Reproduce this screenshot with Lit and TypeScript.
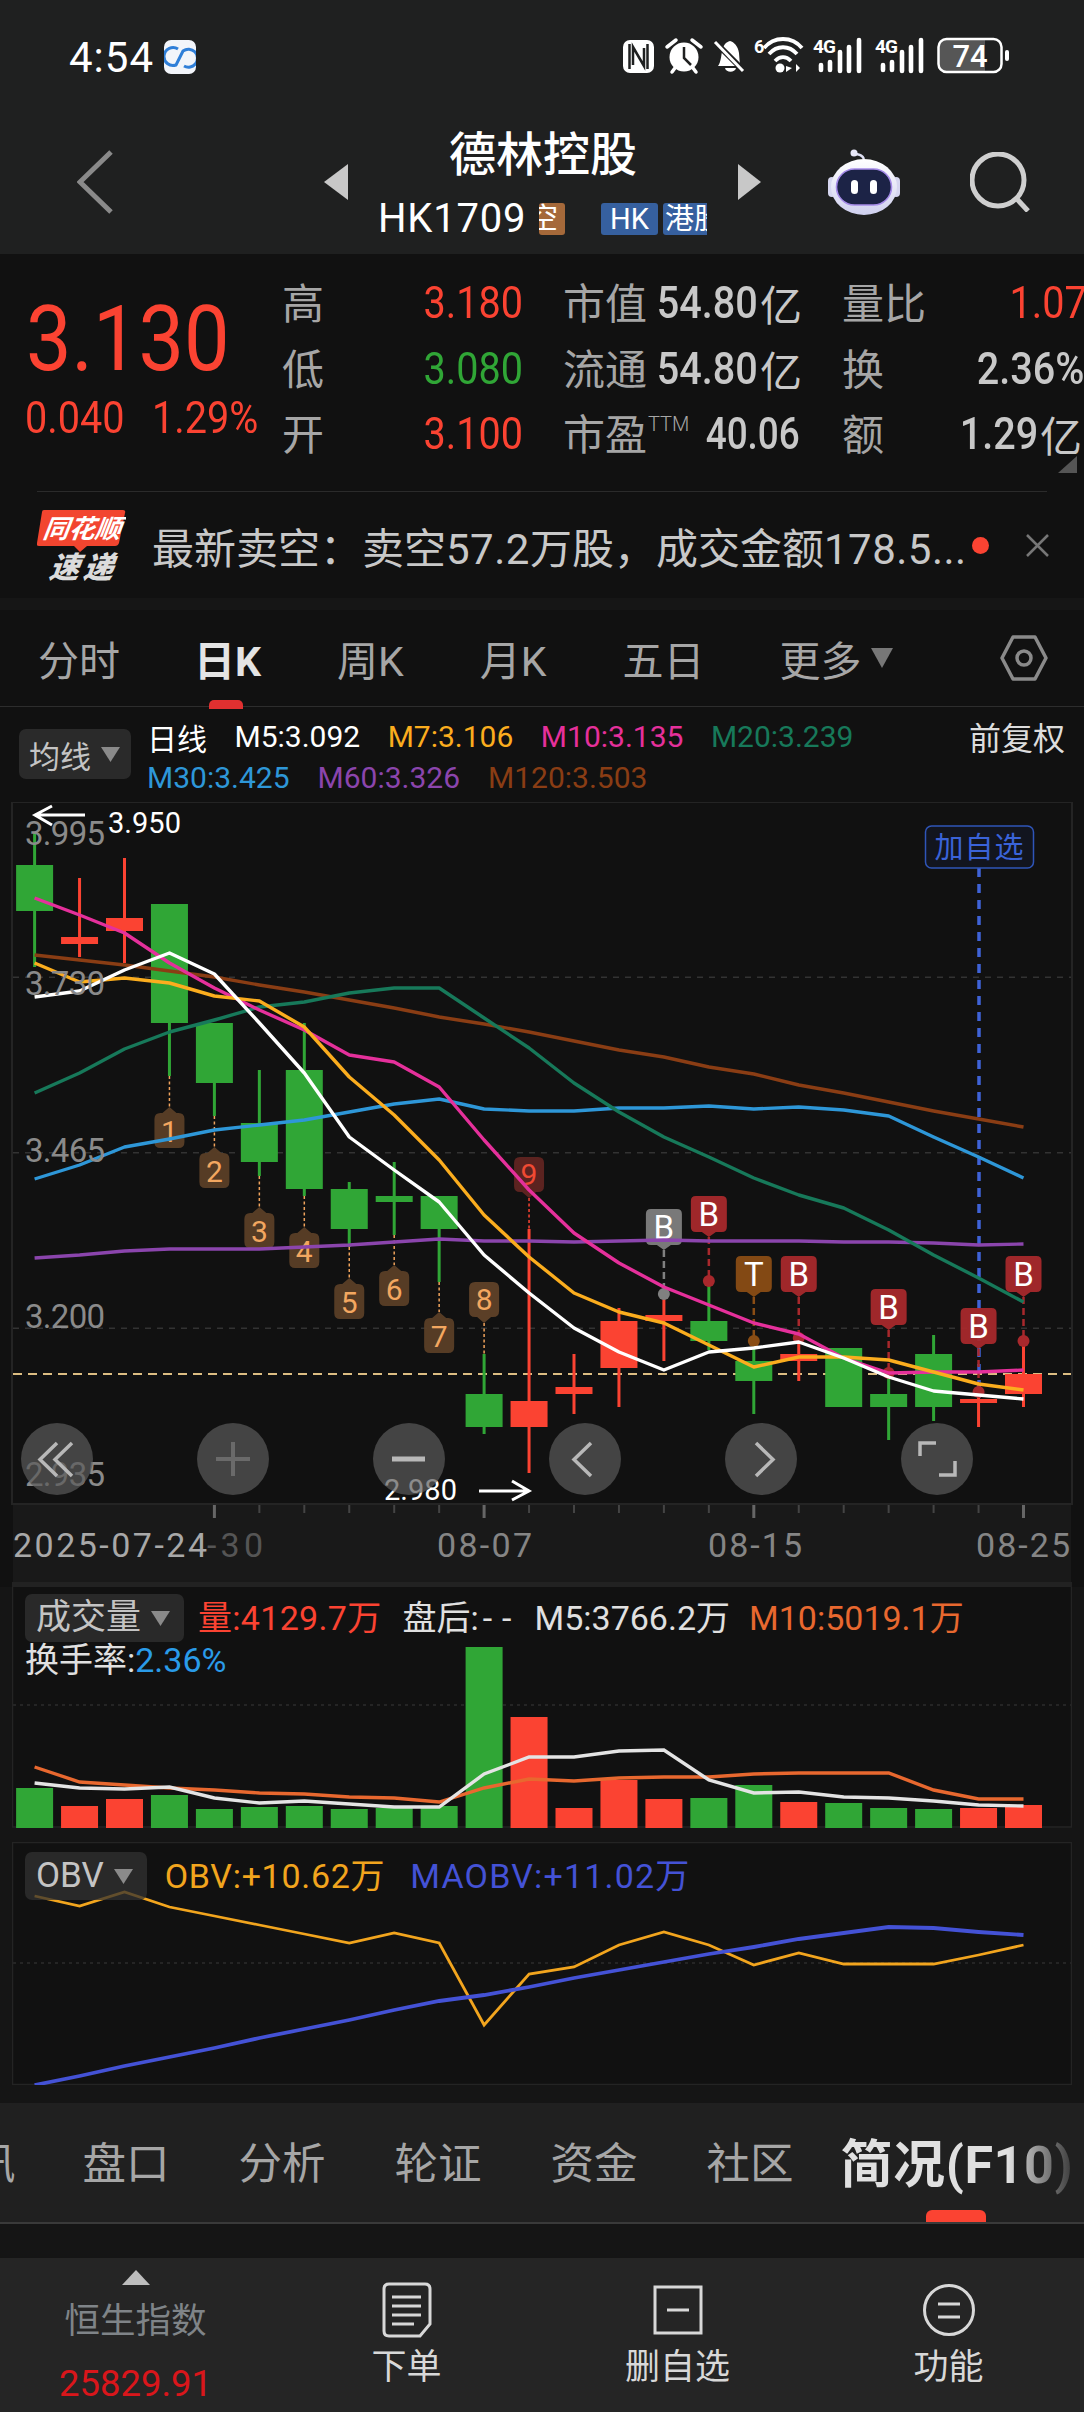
import { LitElement, html, css, svg } from 'lit';
import { customElement } from 'lit/decorators.js';

const RED = '#fb4332';
const GREEN = '#30a636';
const X0 = 34.6;
const STEP = 44.95;
const xi = (i: number) => X0 + STEP * i;

// [bodyTop, bodyBottom, wickTop, wickBottom, isRed]
const CANDLES: [number, number, number, number, number][] = [
  [865, 911, 833, 967, 0],
  [937, 944, 878, 957, 1],
  [918, 931, 858, 963, 1],
  [904, 1023, 904, 1076, 0],
  [1023, 1083, 1023, 1116, 0],
  [1123, 1162, 1070, 1176, 0],
  [1070, 1189, 1023, 1196, 0],
  [1189, 1229, 1182, 1247, 0],
  [1196, 1202, 1162, 1235, 0],
  [1196, 1229, 1196, 1282, 0],
  [1394, 1427, 1354, 1434, 0],
  [1401, 1427, 1229, 1473, 1],
  [1387, 1394, 1354, 1414, 1],
  [1321, 1368, 1308, 1407, 1],
  [1315, 1321, 1295, 1361, 1],
  [1321, 1341, 1282, 1350, 0],
  [1361, 1381, 1342, 1414, 0],
  [1354, 1361, 1335, 1381, 1],
  [1348, 1407, 1348, 1407, 0],
  [1394, 1407, 1373, 1440, 0],
  [1354, 1407, 1335, 1421, 0],
  [1399, 1403, 1393, 1427, 1],
  [1374, 1394, 1343, 1407, 1],
];

const MA: { color: string; ys: number[] }[] = [
  { color: '#8a3d14', ys: [955, 960, 965, 971, 977, 985, 992, 1000, 1008, 1017, 1024, 1032, 1041, 1050, 1057, 1067, 1074, 1085, 1093, 1102, 1111, 1119, 1127] },
  { color: '#8b45ad', ys: [1258, 1255, 1251, 1249, 1249, 1249, 1247, 1245, 1242, 1239, 1241, 1241, 1242, 1241, 1240, 1241, 1241, 1241, 1242, 1242, 1243, 1245, 1244] },
  { color: '#2e97d8', ys: [1179, 1165, 1147, 1139, 1130, 1125, 1120, 1112, 1104, 1099, 1109, 1111, 1111, 1108, 1108, 1106, 1109, 1107, 1110, 1116, 1137, 1157, 1178] },
  { color: '#17795a', ys: [1093, 1073, 1049, 1032, 1020, 1007, 1002, 993, 988, 988, 1018, 1048, 1083, 1112, 1137, 1157, 1178, 1195, 1208, 1230, 1255, 1278, 1302] },
  { color: '#e5309b', ys: [898, 915, 933, 963, 988, 1010, 1030, 1055, 1062, 1087, 1140, 1190, 1233, 1263, 1287, 1305, 1323, 1334, 1358, 1373, 1372, 1372, 1370] },
  { color: '#fbad1e', ys: [963, 982, 978, 983, 996, 1001, 1027, 1077, 1115, 1160, 1215, 1257, 1293, 1312, 1323, 1345, 1367, 1357, 1357, 1360, 1372, 1384, 1390] },
  { color: '#ffffff', ys: [997, 991, 970, 953, 974, 1023, 1073, 1137, 1170, 1202, 1255, 1293, 1328, 1352, 1370, 1352, 1348, 1342, 1358, 1377, 1391, 1395, 1399] },
];

const NUM_MARKS = [
  { i: 3, text: '1', top: 1107, s: 1076 },
  { i: 4, text: '2', top: 1147, s: 1116 },
  { i: 5, text: '3', top: 1207, s: 1176 },
  { i: 6, text: '4', top: 1227, s: 1196 },
  { i: 7, text: '5', top: 1278, s: 1247 },
  { i: 8, text: '6', top: 1265, s: 1235 },
  { i: 9, text: '7', top: 1312, s: 1282 },
];

const TRADE_MARKS = [
  { i: 14, text: 'B', top: 1209, dot: 1294, color: '#808080' },
  { i: 15, text: 'B', top: 1196, dot: 1281, color: '#a8282c' },
  { i: 16, text: 'T', top: 1256, dot: 1341, color: '#8a4d14' },
  { i: 17, text: 'B', top: 1256, dot: 1338, color: '#a8282c' },
  { i: 19, text: 'B', top: 1289, dot: 1373, color: '#a8282c' },
  { i: 21, text: 'B', top: 1308, dot: 1392, color: '#a8282c' },
  { i: 22, text: 'B', top: 1256, dot: 1341, color: '#a8282c' },
];

const VOL: [number, number][] = [
  [1788, 0], [1806, 1], [1799, 1], [1795, 0], [1809, 0], [1807, 0], [1806, 0], [1809, 0], [1808, 0], [1806, 0], [1647, 0], [1717, 1],
  [1808, 1], [1780, 1], [1799, 1], [1798, 0], [1785, 0], [1802, 1], [1803, 0], [1808, 0], [1809, 0], [1808, 1], [1805, 1],
];
const VOL_M5 = [1783, 1788, 1789, 1787, 1798, 1803, 1801, 1804, 1807, 1807, 1774, 1757, 1757, 1751, 1750, 1780, 1793, 1792, 1797, 1798, 1801, 1805, 1806];
const VOL_M10 = [1767, 1782, 1785, 1788, 1790, 1793, 1794, 1797, 1798, 1802, 1788, 1779, 1781, 1778, 1777, 1777, 1774, 1773, 1773, 1773, 1790, 1799, 1799];
const OBV = [1896, 1906, 1892, 1907, 1916, 1925, 1934, 1943, 1933, 1943, 2025, 1974, 1967, 1945, 1932, 1945, 1965, 1953, 1964, 1964, 1964, 1955, 1945];
const MAOBV = [2085, 2076, 2066, 2057, 2048, 2038, 2029, 2020, 2010, 2001, 1995, 1987, 1978, 1970, 1962, 1954, 1947, 1939, 1933, 1927, 1928, 1932, 1935];

const pts = (ys: number[]) => ys.map((y, i) => `${xi(i).toFixed(1)},${y}`).join(' ');

// rounded box with a little point on top or bottom
function tagPath(cx: number, top: number, w: number, h: number, point: number, up: boolean, r: number) {
  const l = cx - w / 2;
  const rr = cx + w / 2;
  const b = top + h;
  if (up) {
    return `M${cx} ${top - point}L${cx + 7} ${top}H${rr - r}Q${rr} ${top} ${rr} ${top + r}V${b - r}Q${rr} ${b} ${rr - r} ${b}H${l + r}Q${l} ${b} ${l} ${b - r}V${top + r}Q${l} ${top} ${l + r} ${top}H${cx - 7}Z`;
  }
  return `M${cx} ${b + point}L${cx + 7} ${b}H${rr - r}Q${rr} ${b} ${rr} ${b - r}V${top + r}Q${rr} ${top} ${rr - r} ${top}H${l + r}Q${l} ${top} ${l} ${top + r}V${b - r}Q${l} ${b} ${l + r} ${b}H${cx - 7}Z`;
}

@customElement('app-root')
export class AppRoot extends LitElement {
  static styles = css`
    :host {
      display: block;
      width: 1084px;
      height: 2412px;
      overflow: hidden;
      background: #111;
      font-family: Roboto, 'Noto Sans CJK SC', sans-serif;
      color: #ccc;
    }
    svg { display: block; }
    svg text { font-family: Roboto, 'Noto Sans CJK SC', sans-serif; }

    .head { background: #1f2020; height: 254px; }
    .status { height: 114px; display: flex; align-items: center; padding: 0 73px 0 69px; }
    .time { font-size: 42px; color: #fff; letter-spacing: 1px; width: 95px; }
    .app-ic { margin-right: auto; }
    .nav { height: 136px; display: flex; align-items: center; padding-left: 77px; }
    .tri-l { margin-left: 211px; }
    .mid { width: 390px; display: flex; flex-direction: column; }
    .title { font-size: 47px; line-height: 58px; color: #fff; text-align: center; font-weight: 500; height: 58px; }
    .sub { width: 359px; margin-top: 15px; height: 40px; display: flex; align-items: center; overflow: hidden; padding-left: 30px; box-sizing: border-box; }
    .code { font-size: 40px; line-height: 40px; color: #fff; width: 148px; flex: none; letter-spacing: .8px; }
    .chip { height: 32px; line-height: 32px; flex: none; overflow: hidden; font-size: 29px; color: #fff; border-radius: 3px; text-align: center; }
    .c1 { width: 26px; margin-left: 13px; background: #a5693a; text-indent: -10px; text-align: left; white-space: nowrap; }
    .c2 { width: 57px; margin-left: 36px; background: #36609f; }
    .c3 { width: 60px; margin-left: 5px; background: #36609f; white-space: nowrap; text-align: left; padding-left: 2px; }
    .robot { margin-left: 67px; }
    .search { margin-left: 70px; }

    .quote { height: 237px; display: flex; position: relative; background: #111; }
    .price { width: 282px; flex: none; padding: 36px 0 0 26px; box-sizing: border-box; color: ${svgColor(RED)}; }
    .big { font-size: 90px; line-height: 100px; height: 100px; display: block; transform: scaleX(.9); transform-origin: left center; white-space: nowrap; }
    .chg { display: flex; margin-top: 2px; margin-left: -1px; font-size: 44px; line-height: 52px; }
    .chg span { display: block; transform: scaleX(.9); transform-origin: left center; }
    .chg .a { width: 127px; }
    .grid { display: grid; grid-template-columns: 143px 97px 138px 142px 164px 116px; grid-auto-rows: 65.5px; padding-top: 16px; font-size: 42px; color: #a6a6a6; }
    .grid > div { display: flex; align-items: center; white-space: nowrap; }
    .lab { padding-bottom: 4px; box-sizing: border-box; }
    .r { justify-content: flex-end; color: #c8c8c8; }
    .p2 { padding-left: 41px; }
    .p3 { padding-left: 40px; }
    .n { display: inline-block; font-size: 45px; transform: scaleX(.88); transform-origin: right center; }
    .m { font-weight: 500; margin-right: 2px; }
    .up { color: ${svgColor(RED)}; margin-right: -1px; }
    .dn { color: ${svgColor(GREEN)}; margin-right: -1px; }
    .over { margin-right: -5px; }
    .tight { transform: scaleX(.82); }
    .nudge { margin-right: -2px; }
    .ttm { font-size: 20px; font-weight: 300; align-self: flex-start; margin-top: 11px; margin-left: 1px; }
    .corner { position: absolute; right: 7px; bottom: 18px; }
    .rule { height: 1px; margin: 0 37px; background: #2b2b2b; }
    .news { height: 106px; display: flex; align-items: center; padding-left: 37px; }
    .news-t { margin-left: 26px; width: 812px; font-size: 42px; color: #c8c8c8; white-space: nowrap; overflow: hidden; }
    .news-t span { letter-spacing: .5px; }
    .dot { width: 17px; height: 17px; border-radius: 50%; background: ${svgColor(RED)}; margin-left: 8px; }
    .close { margin-left: 37px; }
    .band { height: 12px; background: #161616; }

    .tabs { height: 97px; display: flex; align-items: center; padding-left: 38px; gap: 76px; font-size: 41px; color: #a6a6a6; border-bottom: 1px solid #2d2d2d; box-sizing: border-box; }
    .tabs .tab { position: relative; white-space: nowrap; }
    .tabs .on { color: #e4e4e4; font-weight: 700; margin-left: -2px; }
    .tabs .on::after { content: ''; position: absolute; left: 15px; bottom: -21px; width: 34px; height: 9px; border-radius: 5px 5px 0 0; background: #e03030; }
    .more { display: flex; align-items: center; gap: 9px; margin-left: -1px; }
    .hex { margin-left: 31px; }

    .legend { height: 95px; display: flex; padding: 9px 19px 0 19px; box-sizing: border-box; font-size: 30px; }
    .pick { display: flex; align-items: center; background: #2a2a2a; border-radius: 7px; color: #c4c4c4; box-sizing: border-box; }
    .pick.ma { width: 112px; height: 50px; margin-top: 13px; padding-left: 10px; font-size: 31px; gap: 10px; flex: none; }
    .vals { margin-left: 16px; flex: 1; }
    .vrow { height: 41px; display: flex; align-items: center; gap: 28px; white-space: nowrap; }
    .vrow.first { gap: 27.5px; }
    .w { color: #fff; }
    .fq { font-size: 32px; color: #ddd; margin-top: 5px; height: 36px; line-height: 36px; }

    .panel { position: relative; margin: 0 12px; background: #111; }
    .panel > svg { position: absolute; inset: 0; }
    .info { position: relative; padding: 7px 0 0 13px; font-size: 34px; line-height: 36px; }
    .info .line { display: flex; align-items: center; white-space: nowrap; }
    .pick.ind { height: 48px; padding: 0 14px 0 11px; gap: 10px; font-size: 35px; background: rgba(50,50,50,.75); flex: none; }
    .vol { height: 241px; }
    .obv { height: 243px; margin-top: 14px; }
    .lower { background: #151515; padding-bottom: 18px; }
    .c-wt { color: #e0e0e0; }
    .c-rd { color: ${svgColor(RED)}; margin-left: 14px; letter-spacing: .3px; }
    .c-af { margin-left: 21px; }
    .dash { letter-spacing: 10px; margin-left: 4px; }
    .c-m5 { margin-left: 13px; }
    .c-m10 { color: #e8682f; margin-left: 19px; }
    .turn { color: #e0e0e0; }
    .turn span { color: #2a9be8; }
    .obv .info { padding-top: 10px; }
    .c-ob { color: #f2a51e; margin-left: 18px; letter-spacing: .7px; }
    .c-mo { color: #4452d6; margin-left: 25px; letter-spacing: 1.2px; }

    .dtabs { height: 121px; background: #202020; display: flex; align-items: center; font-size: 43.5px; color: #a6a6a6; border-bottom: 2px solid #3a3a3a; box-sizing: border-box; overflow: hidden; gap: 69px; padding-bottom: 5px; }
    .dtabs span { white-space: nowrap; flex: none; position: relative; }
    .dtabs .cut { margin-left: -28px; margin-right: -2px; }
    .dtabs .f10 { margin-left: -22px; font-size: 52px; font-weight: 700; letter-spacing: .6px; width: 232px; background: linear-gradient(90deg, #e0e0e0 72%, #3a3a3a 100%); -webkit-background-clip: text; background-clip: text; color: transparent; }
    .gap { height: 34px; background: #151515; position: relative; }
    .gap::before { content: ''; position: absolute; left: 926px; top: -14px; width: 60px; height: 12px; border-radius: 6px 6px 0 0; background: ${svgColor(RED)}; }
    .bar { height: 154px; background: #252525; display: grid; grid-template-columns: repeat(4, 1fr); }
    .cell { display: flex; flex-direction: column; align-items: center; color: #d8d8d8; font-size: 35px; }
    .hs { color: #7f8488; font-size: 35.5px; padding-top: 12px; }
    .hs .v { color: #d9161b; font-size: 36.5px; margin-top: 18px; line-height: 44px; }
    .hs .k { line-height: 46px; margin-top: 13px; }
    .lb { line-height: 44px; margin-top: 8px; }
    .icon { margin-top: 24px; height: 56px; display: flex; align-items: center; }
  `;

  private renderChart() {
    const gridY = [977.3, 1152.7, 1328.3];
    return svg`
      <rect x="12" y="802" width="1060" height="702" fill="#111" stroke="#242424" stroke-width="2"/>
      <rect x="13" y="1505" width="1058" height="77" fill="#191919"/>
      <rect x="12" y="1582" width="1060" height="5" fill="#222"/>
      ${gridY.map((y) => svg`<line x1="13" x2="1071" y1=${y} y2=${y} stroke="#333" stroke-width="1.5" stroke-dasharray="6 6"/>`)}
      <line x1="13" x2="1071" y1="1374" y2="1374" stroke="#dcbd82" stroke-width="2" stroke-dasharray="9 6"/>
      <line x1="979" x2="979" y1="868" y2="1398" stroke="#3f63d8" stroke-width="3.5" stroke-dasharray="9 7"/>

      ${CANDLES.map(([t, b, h, l, up], i) => {
        const c = up ? RED : GREEN;
        return svg`
          <rect x=${xi(i) - 1.5} y=${h} width="3" height=${l - h} fill=${c}/>
          <rect x=${xi(i) - 18.5} y=${t} width="37" height=${b - t} fill=${c}/>`;
      })}

      ${NUM_MARKS.map((m) => svg`
        <line x1=${xi(m.i)} x2=${xi(m.i)} y1=${m.s} y2=${m.top} stroke="#f0a35c" stroke-width="1.5" stroke-dasharray="3 2.5"/>
        <path d=${tagPath(xi(m.i), m.top + 6, 30, 35, 6, true, 6)} fill="#5b3f27" fill-opacity=".95"/>
        <text x=${xi(m.i)} y=${m.top + 35} text-anchor="middle" font-size="30" fill="#f3a760">${m.text}</text>`)}
      <line x1=${xi(10)} x2=${xi(10)} y1="1323" y2="1354" stroke="#f0a35c" stroke-width="1.5" stroke-dasharray="3 2.5"/>
      <path d=${tagPath(xi(10), 1282, 30, 35, 6, false, 6)} fill="#5b3f27"/>
      <text x=${xi(10)} y="1310" text-anchor="middle" font-size="30" fill="#f3a760">8</text>
      <line x1=${xi(11)} x2=${xi(11)} y1="1198" y2="1229" stroke=${RED} stroke-width="1.5" stroke-dasharray="3 2.5"/>
      <path d=${tagPath(xi(11), 1157, 30, 35, 6, false, 6)} fill="#5c2320"/>
      <text x=${xi(11)} y="1185" text-anchor="middle" font-size="30" fill="#f04a33">9</text>

      ${TRADE_MARKS.map((m) => svg`
        <line x1=${xi(m.i)} x2=${xi(m.i)} y1=${m.top + 41} y2=${m.dot} stroke=${m.color} stroke-width="2.5" stroke-dasharray="7 4"/>
        <circle cx=${xi(m.i)} cy=${m.dot} r="6" fill=${m.color}/>
        <path d=${tagPath(xi(m.i), m.top, 36, 36, 5, false, 5)} fill=${m.color} fill-opacity=".94"/>
        <text x=${xi(m.i)} y=${m.top + 30} text-anchor="middle" font-size="33" fill="#fff">${m.text}</text>`)}

      ${MA.map((m) => svg`<polyline points=${pts(m.ys)} fill="none" stroke=${m.color} stroke-width="3.4" stroke-linejoin="round"/>`)}

      ${[['3.995', 845], ['3.730', 995], ['3.465', 1162], ['3.200', 1328], ['2.935', 1486]].map(
        ([t, y]) => svg`<text x="25" y=${y} font-size="33" fill="#8a8a8a" textLength="80">${t}</text>`)}

      <text x="108" y="833" font-size="29" fill="#fff" textLength="73">3.950</text>
      <path d="M85 815H36M52 806L35 815L52 825" fill="none" stroke="#fff" stroke-width="3"/>
      <text x="384" y="1500" font-size="29" fill="#fff" textLength="73">2.980</text>
      <path d="M479 1491H528M512 1481L529 1491L512 1500" fill="none" stroke="#fff" stroke-width="3"/>

      ${[57, 233, 409, 585, 761, 937].map((x) => svg`<circle cx=${x} cy="1459" r="36" fill="#5a5a5a" fill-opacity=".7"/>`)}
      <path d="M57 1443L40 1459.5L57 1476M72 1443L55 1459.5L72 1476" fill="none" stroke="#b8b8b8" stroke-width="3.5"/>
      <path d="M233 1442V1476M216 1459H250" fill="none" stroke="#6a6a6a" stroke-width="4"/>
      <path d="M392 1459H425" fill="none" stroke="#b8b8b8" stroke-width="5"/>
      <path d="M591 1443L574 1459.5L591 1476" fill="none" stroke="#b8b8b8" stroke-width="3.5"/>
      <path d="M756 1443L773 1459.5L756 1476" fill="none" stroke="#b8b8b8" stroke-width="3.5"/>
      <path d="M920 1456V1443H936M955 1461V1475H939" fill="none" stroke="#b8b8b8" stroke-width="3.5"/>

      ${CANDLES.map((_, i) => i < 4 ? '' : svg`<rect x=${xi(i) - (i % 6 === 4 ? 1.5 : 1)} y="1505" width=${i % 6 === 4 ? 3 : 2} height=${i % 6 === 4 ? 13 : 8} fill=${i % 6 === 4 ? '#666' : '#444'}/>`)}
      <text x="207" y="1557" font-size="34" fill="#555" textLength="56">-30</text>
      <text x="13" y="1557" font-size="34" fill="#a8a8a8" textLength="194">2025-07-24</text>
      <text x="437" y="1557" font-size="34" fill="#858585" textLength="95">08-07</text>
      <text x="708" y="1557" font-size="34" fill="#858585" textLength="94">08-15</text>
      <text x="976" y="1557" font-size="34" fill="#858585" textLength="94">08-25</text>

      <rect x="925.5" y="826" width="108" height="42" rx="6" fill="#12151f" stroke="#2f55b8" stroke-width="1.5"/>
      <text x="979.5" y="858" text-anchor="middle" font-size="29" letter-spacing="1" fill="#3a63d8">加自选</text>
    `;
  }

  private renderStatusIcons() {
    return html`<svg width="390" height="44" viewBox="622 35 390 44">
      <rect x="624" y="40" width="31" height="33" rx="7" fill="#fff"/>
      <path d="M630.5 44V69M648.5 44V69" stroke="#1f2020" stroke-width="2.5"/>
      <path d="M634 65V47L645 66V48" fill="none" stroke="#1f2020" stroke-width="2.5"/>
      <circle cx="685" cy="57" r="14.5" fill="#fff"/>
      <path d="M685 47V58L692 65" fill="none" stroke="#1f2020" stroke-width="2.5"/>
      <path d="M668 47L677 40M702 47L693 40M673 72L676 68M697 72L694 68" stroke="#fff" stroke-width="3.5" stroke-linecap="round"/>
      <path d="M719 66C722 62 722 56 723 52C724 45 727 42 731 41C735 42 739 46 740 53L741 66Z" fill="#fff"/>
      <path d="M726 68H737C736 73 727 73 726 68Z" fill="#fff"/>
      <path d="M716 42L746 72" stroke="#1f2020" stroke-width="6"/>
      <path d="M716 42L744 71" stroke="#fff" stroke-width="3"/>
      <text x="755" y="53" font-size="18" font-weight="700" fill="#fff">6</text>
      <path d="M765 48C775 36 793 36 803 48M770 54C778 45 790 45 798 54M776 61C781 56 787 56 792 61" fill="none" stroke="#fff" stroke-width="3.8"/>
      <circle cx="781" cy="68" r="4.5" fill="#fff"/>
      <path d="M787 72V66L793 68ZM797 64V72L801 68Z" fill="#fff"/>
      ${[814, 876].map((x) => svg`
        <text x=${x} y="53" font-size="19" font-weight="700" fill="#fff" textLength="23">4G</text>
        <path d=${`M${x + 8} 65V70M${x + 17} 62V70M${x + 27} 52V71M${x + 36} 47V71M${x + 46} 40V71`} stroke="#fff" stroke-width="4.6" stroke-linecap="round"/>`)}
      <path d="M946 39.5H986V71.5H946A7 7 0 0 1 940 65V46A7 7 0 0 1 946 39.5Z" fill="#565656"/>
      <rect x="939.5" y="39" width="63" height="33" rx="8" fill="none" stroke="#fff" stroke-width="2.5"/>
      <text x="971" y="67" text-anchor="middle" font-size="31" font-weight="500" fill="#fff">74</text>
      <rect x="1006" y="50" width="4" height="11" rx="2" fill="#fff"/>
    </svg>`;
  }

  render() {
    const arrow = html`<svg width="19" height="15" viewBox="0 0 19 15"><path d="M0 0H19L9.5 15Z" fill="#8a8a8a"/></svg>`;
    return html`
      <div class="head">
        <div class="status">
          <div class="time">4:54</div>
          <svg class="app-ic" width="32" height="34" viewBox="0 0 32 34">
            <rect width="32" height="34" rx="7" fill="#f2f5fa"/>
            <path d="M14 9A9 9 0 1 0 12 25L19 11A9 9 0 1 1 20 26" fill="none" stroke="#2f7fd8" stroke-width="3"/>
          </svg>
          ${this.renderStatusIcons()}
        </div>
        <div class="nav">
          <svg width="36" height="64" viewBox="0 0 36 64"><path d="M34 2L3 32L34 62" fill="none" stroke="#8a8a8a" stroke-width="5"/></svg>
          <svg class="tri-l" width="24" height="36" viewBox="0 0 24 36"><path d="M24 0V36L0 18Z" fill="#c8c8c8"/></svg>
          <div class="mid">
            <div class="title">德林控股</div>
            <div class="sub">
              <div class="code">HK1709</div>
              <div class="chip c1">空</div>
              <div class="chip c2">HK</div>
              <div class="chip c3">港股通</div>
            </div>
          </div>
          <svg width="23" height="36" viewBox="0 0 23 36"><path d="M0 0V36L23 18Z" fill="#c8c8c8"/></svg>
          <svg class="robot" width="72" height="66" viewBox="0 0 72 66">
            <defs>
              <linearGradient id="rb" x1="0" y1="0" x2="0" y2="1"><stop offset="0" stop-color="#ffffff"/><stop offset="1" stop-color="#cfd0ef"/></linearGradient>
            </defs>
            <path d="M36 10C34 6 32 6 28 5" fill="none" stroke="#dfe0f4" stroke-width="2.5"/>
            <circle cx="26" cy="4" r="3.5" fill="#e8e8f8"/>
            <rect x="0" y="28" width="8" height="20" rx="4" fill="#d6d6f0"/>
            <rect x="64" y="28" width="8" height="20" rx="4" fill="#d6d6f0"/>
            <ellipse cx="36" cy="38" rx="33" ry="28" fill="url(#rb)"/>
            <rect x="8.5" y="20" width="55" height="36" rx="18" fill="#1c2346" stroke="#a58be8" stroke-width="1.6"/>
            <rect x="23" y="31" width="7" height="14" rx="3.5" fill="#fff"/>
            <rect x="42" y="31" width="7" height="14" rx="3.5" fill="#fff"/>
          </svg>
          <svg class="search" width="60" height="60" viewBox="0 0 60 60">
            <circle cx="28" cy="28" r="26" fill="none" stroke="#cfcfcf" stroke-width="5"/>
            <path d="M46 46L58 59" stroke="#cfcfcf" stroke-width="5"/>
          </svg>
        </div>
      </div>

      <div class="quote">
        <div class="price">
          <span class="big">3.130</span>
          <div class="chg"><span class="a">0.040</span><span>1.29%</span></div>
        </div>
        <div class="grid">
          <div class="lab">高</div><div class="r"><span class="n up">3.180</span></div>
          <div class="lab p2">市值</div><div class="r"><span class="n m">54.80</span>亿</div>
          <div class="lab p3">量比</div><div class="r"><span class="n up over">1.07</span></div>
          <div class="lab">低</div><div class="r"><span class="n dn">3.080</span></div>
          <div class="lab p2">流通</div><div class="r"><span class="n m">54.80</span>亿</div>
          <div class="lab p3">换</div><div class="r"><span class="n m nudge">2.36%</span></div>
          <div class="lab">开</div><div class="r"><span class="n up">3.100</span></div>
          <div class="lab p2">市盈<span class="ttm">TTM</span></div><div class="r"><span class="n m tight">40.06</span></div>
          <div class="lab p3">额</div><div class="r"><span class="n m">1.29</span>亿</div>
        </div>
        <svg class="corner" width="19" height="17" viewBox="0 0 19 17"><path d="M19 0V17H0Z" fill="#555"/></svg>
      </div>
      <div class="rule"></div>
      <div class="news">
        <svg width="89" height="72" viewBox="0 0 89 72">
          <path d="M7 1H86Q89 1 88 4L82 34Q81 37 78 37H50L43 43L37 37H2Q-1 37 0 34L5 3Q5 1 7 1Z" fill="#f2452f"/>
          <text x="44" y="29" text-anchor="middle" font-size="26" font-weight="700" font-style="italic" fill="#fff" transform="skewX(-8) translate(4 0)">同花顺</text>
          <text x="43" y="69" text-anchor="middle" font-size="30" font-weight="900" font-style="italic" fill="#dcdcdc" textLength="64" transform="skewX(-8) translate(10 0)">速递</text>
        </svg>
        <div class="news-t">最新卖空：卖空<span>57.2</span>万股，成交金额<span>178.5...</span></div>
        <div class="dot"></div>
        <svg class="close" width="23" height="23" viewBox="0 0 23 23"><path d="M1 1L22 22M22 1L1 22" stroke="#777" stroke-width="2.5"/></svg>
      </div>
      <div class="band"></div>

      <div class="tabs">
        <span class="tab">分时</span>
        <span class="tab on">日K</span>
        <span class="tab">周K</span>
        <span class="tab">月K</span>
        <span class="tab">五日</span>
        <span class="tab more">更多<svg width="22" height="20" viewBox="0 0 22 20"><path d="M0 0H22L11 20Z" fill="#777"/></svg></span>
        <svg class="hex" width="48" height="46" viewBox="0 0 48 46">
          <path d="M13 2H35L46 23L35 44H13L2 23Z" fill="none" stroke="#8a8a8a" stroke-width="3.5" stroke-linejoin="round"/>
          <circle cx="24" cy="23" r="7" fill="none" stroke="#8a8a8a" stroke-width="3.5"/>
        </svg>
      </div>

      <div class="legend">
        <div class="pick ma">均线${arrow}</div>
        <div class="vals">
          <div class="vrow first w"><span>日线</span><span>M5:3.092</span><span style="color:#fbad1e">M7:3.106</span><span style="color:#e5309b">M10:3.135</span><span style="color:#17795a">M20:3.239</span></div>
          <div class="vrow"><span style="color:#2e97d8">M30:3.425</span><span style="color:#8b45ad">M60:3.326</span><span style="color:#8a3d14">M120:3.503</span></div>
        </div>
        <div class="fq">前复权</div>
      </div>

      <svg width="1084" height="785" viewBox="0 802 1084 785">${this.renderChart()}</svg>

      <div class="lower">
        <div class="panel vol">
          <svg width="1060" height="241" viewBox="12 1587 1060 241">
            <line x1="13" x2="1071" y1="1705" y2="1705" stroke="#2c2c2c" stroke-width="1.5" stroke-dasharray="3 4"/>
            <path d="M12.5 1827V1587M1071.5 1587V1827M12 1827H1072" fill="none" stroke="#242424" stroke-width="1.5"/>
            ${VOL.map(([y, up], i) => svg`<rect x=${xi(i) - 18.5} y=${y} width="37" height=${1828 - y} fill=${up ? RED : GREEN}/>`)}
            <polyline points=${pts(VOL_M10)} fill="none" stroke="#e8682f" stroke-width="3.4"/>
            <polyline points=${pts(VOL_M5)} fill="none" stroke="#e4e4e4" stroke-width="3.4"/>
          </svg>
          <div class="info">
            <div class="line">
              <div class="pick ind">成交量${arrow}</div>
              <span class="c-rd">量:4129.7万</span>
              <span class="c-wt c-af">盘后:<span class="dash">--</span></span>
              <span class="c-wt c-m5">M5:3766.2万</span>
              <span class="c-m10">M10:5019.1万</span>
            </div>
            <div class="line turn">换手率:<span>2.36%</span></div>
          </div>
        </div>
        <div class="panel obv">
          <svg width="1060" height="243" viewBox="12 1842 1060 243">
            <line x1="13" x2="1071" y1="1963" y2="1963" stroke="#2c2c2c" stroke-width="1.5" stroke-dasharray="3 4"/>
            <rect x="12.5" y="1842.5" width="1059" height="242" fill="none" stroke="#242424" stroke-width="1.5"/>
            <polyline points=${pts(OBV)} fill="none" stroke="#f2a51e" stroke-width="2.8"/>
            <polyline points=${pts(MAOBV)} fill="none" stroke="#4452d6" stroke-width="3.8"/>
          </svg>
          <div class="info">
            <div class="line">
              <div class="pick ind">OBV${arrow}</div>
              <span class="c-ob">OBV:+10.62万</span>
              <span class="c-mo">MAOBV:+11.02万</span>
            </div>
          </div>
        </div>
      </div>

      <div class="dtabs">
        <span class="cut">讯</span>
        <span>盘口</span>
        <span>分析</span>
        <span>轮证</span>
        <span>资金</span>
        <span>社区</span>
        <span class="f10">简况(F10)</span>
      </div>
      <div class="gap"></div>
      <div class="bar">
        <div class="cell hs">
          <svg width="28" height="15" viewBox="0 0 28 15"><path d="M14 0L28 15H0Z" fill="#bdbdbd"/></svg>
          <div class="k">恒生指数</div>
          <div class="v">25829.91</div>
        </div>
        <div class="cell">
          <div class="icon"><svg width="50" height="56" viewBox="0 0 50 56">
            <path d="M7 2H43Q48 2 48 7V42L38 54H7Q2 54 2 49V7Q2 2 7 2Z" fill="none" stroke="#d8d8d8" stroke-width="3"/>
            <path d="M10 15H39M10 24H39M10 33H39M10 42H32" stroke="#d8d8d8" stroke-width="3"/>
          </svg></div>
          <div class="lb">下单</div>
        </div>
        <div class="cell">
          <div class="icon"><svg width="50" height="50" viewBox="0 0 50 50">
            <rect x="2" y="2" width="46" height="46" fill="none" stroke="#d8d8d8" stroke-width="3"/>
            <path d="M14 25H36" stroke="#d8d8d8" stroke-width="3"/>
          </svg></div>
          <div class="lb">删自选</div>
        </div>
        <div class="cell">
          <div class="icon"><svg width="52" height="52" viewBox="0 0 52 52">
            <circle cx="26" cy="26" r="24.5" fill="none" stroke="#d8d8d8" stroke-width="3"/>
            <path d="M15 20H37M15 33H37" stroke="#d8d8d8" stroke-width="3"/>
          </svg></div>
          <div class="lb">功能</div>
        </div>
      </div>
    `;
  }
}

function svgColor(c: string) {
  return css([c] as unknown as TemplateStringsArray);
}
